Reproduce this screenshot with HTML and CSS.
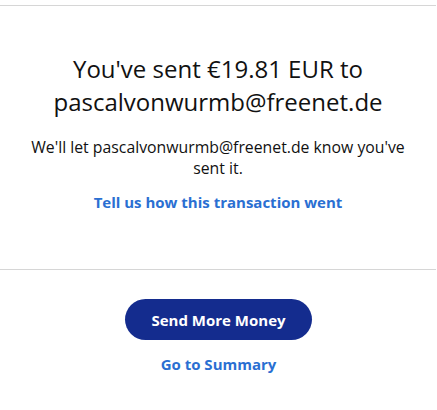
FILE: index.html
```html
<!DOCTYPE html>
<html lang="en">
<head>
<meta charset="utf-8">
<title>Payment sent</title>
<link rel="stylesheet" href="styles.css">
</head>
<body>
<main class="page">
  <section class="summary">
    <h1 class="headline">You've sent €19.81 EUR to pascalvonwurmb@freenet.de</h1>
    <p class="note">We'll let pascalvonwurmb@freenet.de know you've sent it.</p>
    <a class="link feedback" href="#">Tell us how this transaction went</a>
  </section>
  <section class="actions">
    <button class="primary" type="button">Send More Money</button>
    <a class="link" href="#">Go to Summary</a>
  </section>
</main>
</body>
</html>
```

FILE: styles.css
```css
html, body {
  margin: 0;
  padding: 0;
  background: #ffffff;
}

body {
  font-family: "Open Sans", "Noto Sans", sans-serif;
  color: #1a1a1a;
}

.page {
  padding-top: 5px;
}

.summary {
  border-top: 1px solid #d6d6d6;
  border-bottom: 1px solid #d6d6d6;
  margin-right: 1px;
  padding: 46px 20px 56px;
  text-align: center;
  display: flex;
  flex-direction: column;
  align-items: center;
}

.headline {
  margin: 0;
  font-size: 24px;
  font-weight: 400;
  line-height: 33px;
  color: #111111;
  max-width: 340px;
}

.note {
  margin: 19px 0 0;
  font-size: 15.8px;
  line-height: 21px;
  color: #111111;
  max-width: 390px;
}

.link {
  color: #2a6fd2;
  font-weight: 700;
  font-size: 15px;
  line-height: 21px;
  text-decoration: none;
}

.feedback {
  margin-top: 13px;
}

.actions {
  display: flex;
  flex-direction: column;
  align-items: center;
  padding-top: 29px;
  gap: 14px;
}

.primary {
  width: 187px;
  height: 41px;
  border: none;
  border-radius: 21px;
  background: #142c8e;
  color: #ffffff;
  font-family: inherit;
  font-weight: 700;
  font-size: 15px;
  cursor: pointer;
}
```
